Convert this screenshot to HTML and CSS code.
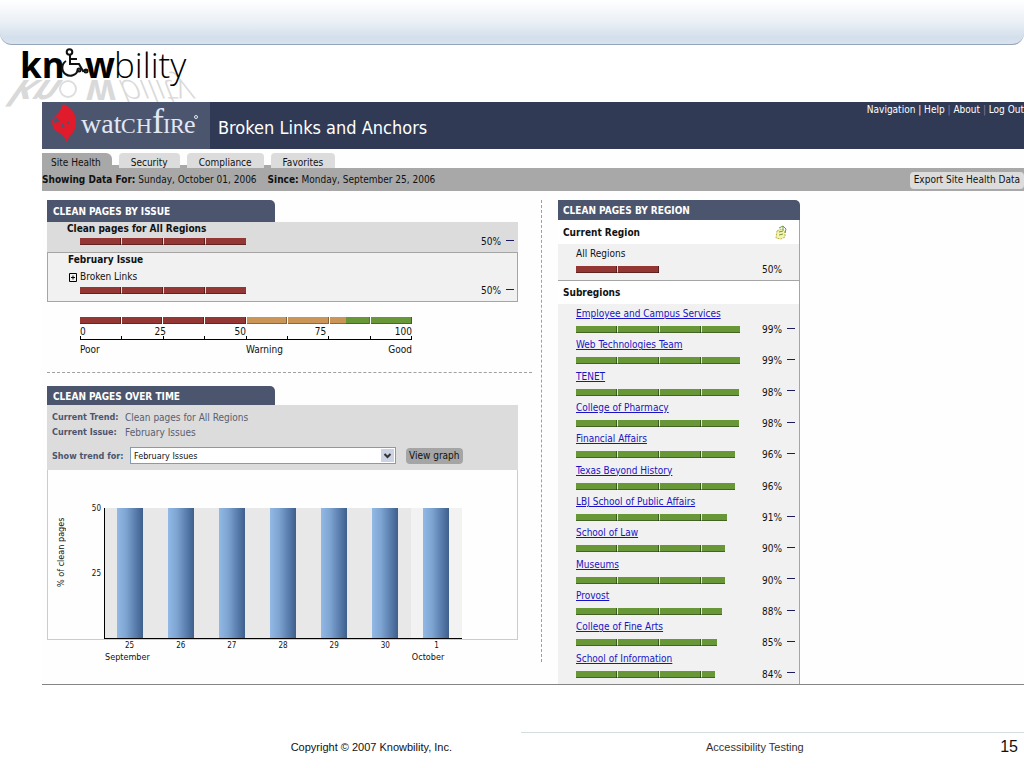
FILE: index.html
```html
<!DOCTYPE html>
<html lang="en">
<head>
<meta charset="utf-8">
<title>Broken Links and Anchors</title>
<link rel="stylesheet" href="styles.css">
</head>
<body>
<div class="slide-top"></div>
<div class="brand">
  <svg class="brand-logo" width="230" height="57" viewBox="0 0 230 57" role="img" aria-label="knowbility">
    <g class="brand-shadow" aria-hidden="true">
      <text x="0" y="0" class="kb-bold" transform="matrix(1 0 0.7 -1 21 35)">kn</text>
      <text x="0" y="0" class="kb-bold" transform="matrix(1 0 0 -1 86 35)">w</text>
      <text x="0" y="0" class="kb-light" transform="matrix(1 0 -0.4 -1 116 35)">bility</text>
      <circle cx="68" cy="44" r="8"/>
    </g>
    <text x="20" y="33" class="kb-bold">kn</text>
    <text x="85" y="33" class="kb-bold">w</text>
    <text x="114" y="33" class="kb-light">bility</text>
    <g class="chair">
      <circle cx="69.500" cy="7" r="2.800"/>
      <path d="M70 10v9h9l4 7 4-1M70 14h7M66 16a8 8 0 1 0 12 9"/>
      <circle cx="79" cy="25" r="1.500"/><circle cx="86" cy="26" r="1.500"/>
    </g>
  </svg>
</div>
<main class="app">
  <header class="app-head">
    <div class="product">
      <svg width="168" height="47" viewBox="0 0 168 47" role="img" aria-label="Watchfire">
        <path fill="#e01b2c" d="M21 2c8 3 13 9 13 18 0 9-4 11-10 20-1-5-2-6-5-8-6-3-9-7-9-13 1-4 5-6 7-9 2-3 3-5 4-8z"/>
        <path fill="#4c556e" d="M13 15l5 3-2 2-5 1zM20 21l3 3-3 2zM25 19l3 1-3 3z"/>
        <g class="wf-text">
          <text x="39" y="31" font-size="28">wat</text>
          <text x="79" y="31" font-size="22">C</text>
          <text x="94" y="31" font-size="22">H</text>
          <text x="110" y="31" font-size="36">f</text>
          <text x="121" y="31" font-size="22">I</text>
          <text x="128" y="31" font-size="22">R</text>
          <text x="142" y="31" font-size="26">e</text>
          <circle cx="154" cy="15" r="1.500"/>
        </g>
      </svg>
    </div>
    <h1>Broken Links and Anchors</h1>
    <nav class="tools"><a href="#">Navigation</a> | <a href="#">Help</a> <i>|</i> <a href="#">About</a> <i>|</i> <a href="#">Log Out</a></nav>
  </header>
  <nav class="tabs">
    <a href="#" class="tab active">Site Health</a><a href="#" class="tab">Security</a><a href="#" class="tab">Compliance</a><a href="#" class="tab">Favorites</a>
  </nav>
  <div class="datebar">
    <span><b>Showing Data For:</b> Sunday, October 01, 2006</span>
    <span><b>Since:</b> Monday, September 25, 2006</span>
    <button class="export">Export Site Health Data</button>
  </div>
  <div class="columns">
    <div class="left">
      <section class="panel">
        <h2>CLEAN PAGES BY ISSUE</h2>
        <div class="all">
          <h3>Clean pages for All Regions</h3>
          <div class="metric"><div class="track"><div class="fill red" style="width:50%"></div></div><span class="pct">50%</span><span class="dash"></span></div>
        </div>
        <div class="issue">
          <h3>February Issue</h3>
          <div class="sub"><svg width="8" height="9" viewBox="0 0 8 9" aria-hidden="true"><path d="M.5.5h7v8h-7zM2 4.500h4M4 2.500v4" fill="none" stroke="#000"/></svg>Broken Links</div>
          <div class="metric"><div class="track"><div class="fill red" style="width:50%"></div></div><span class="pct">50%</span><span class="dash"></span></div>
        </div>
      </section>
      <div class="scale">
        <div class="segments"><span class="red"></span><span class="red"></span><span class="red"></span><span class="red"></span><span class="tan"></span><span class="tan"></span><span class="mixed"></span><span class="green"></span></div>
        <div class="numbers"><span>0</span><span>25</span><span>50</span><span>75</span><span>100</span></div>
        <div class="ticks"><i></i><i></i><i></i><i></i><i></i><i></i><i></i><i></i></div>
        <div class="words"><span>Poor</span><span>Warning</span><span>Good</span></div>
      </div>
      <div class="dots"></div>
      <section class="panel">
        <h2 class="short">CLEAN PAGES OVER TIME</h2>
        <form class="trend">
          <p><b>Current Trend:</b>Clean pages for All Regions</p>
          <p><b>Current Issue:</b>February Issues</p>
          <div class="pick">
            <label for="trend">Show trend for:</label>
            <span class="combo"><select id="trend"><option>February Issues</option></select><svg width="13" height="13" viewBox="0 0 13 13" aria-hidden="true"><path d="M3.500 5l3 3 3-3" fill="none" stroke="#333" stroke-width="2"/></svg></span>
            <button type="button">View graph</button>
          </div>
        </form>
        <div class="chart">
          <div class="ylabel">% of clean pages</div>
          <div class="ynums"><span>50</span><span>25</span></div>
          <div class="plot"><div><i></i></div><div><i></i></div><div><i></i></div><div><i></i></div><div><i></i></div><div><i></i></div><div><i></i></div></div>
        </div>
        <div class="days"><span>25</span><span>26</span><span>27</span><span>28</span><span>29</span><span>30</span><span>1</span></div>
        <div class="months"><span>September</span><span>October</span></div>
      </section>
    </div>
    <section class="regions">
      <h2>CLEAN PAGES BY REGION</h2>
      <div class="region-body">
        <h3>Current Region<svg width="13" height="15" viewBox="0 0 13 15" aria-hidden="true"><path d="M2 6l4-2 4 2v6l-4 2-5-1z" fill="#f6f3b0" stroke="#b8b048" stroke-dasharray="2 1"/><path d="M4 3l4-2 3 3-1 4M8 1v4M4 7l4-1M4 10l4-1" fill="none" stroke="#6f9a3c"/></svg></h3>
        <div class="current"><div class="name">All Regions</div>
          <div class="metric"><div class="track"><div class="fill red" style="width:50%"></div></div><span class="pct">50%</span></div></div>
        <h3 class="subhead">Subregions</h3>
        <ul>
          <li><a href="#">Employee and Campus Services</a><div class="metric"><div class="track"><div class="fill green" style="width:99%"></div></div><span class="pct">99%</span><span class="dash"></span></div></li>
          <li><a href="#">Web Technologies Team</a><div class="metric"><div class="track"><div class="fill green" style="width:99%"></div></div><span class="pct">99%</span><span class="dash"></span></div></li>
          <li><a href="#">TENET</a><div class="metric"><div class="track"><div class="fill green" style="width:98%"></div></div><span class="pct">98%</span><span class="dash"></span></div></li>
          <li><a href="#">College of Pharmacy</a><div class="metric"><div class="track"><div class="fill green" style="width:98%"></div></div><span class="pct">98%</span><span class="dash"></span></div></li>
          <li><a href="#">Financial Affairs</a><div class="metric"><div class="track"><div class="fill green" style="width:96%"></div></div><span class="pct">96%</span><span class="dash"></span></div></li>
          <li><a href="#">Texas Beyond History</a><div class="metric"><div class="track"><div class="fill green" style="width:96%"></div></div><span class="pct">96%</span></div></li>
          <li><a href="#">LBJ School of Public Affairs</a><div class="metric"><div class="track"><div class="fill green" style="width:91%"></div></div><span class="pct">91%</span><span class="dash"></span></div></li>
          <li><a href="#">School of Law</a><div class="metric"><div class="track"><div class="fill green" style="width:90%"></div></div><span class="pct">90%</span><span class="dash"></span></div></li>
          <li><a href="#">Museums</a><div class="metric"><div class="track"><div class="fill green" style="width:90%"></div></div><span class="pct">90%</span><span class="dash"></span></div></li>
          <li><a href="#">Provost</a><div class="metric"><div class="track"><div class="fill green" style="width:88%"></div></div><span class="pct">88%</span><span class="dash"></span></div></li>
          <li><a href="#">College of Fine Arts</a><div class="metric"><div class="track"><div class="fill green" style="width:85%"></div></div><span class="pct">85%</span><span class="dash"></span></div></li>
          <li><a href="#">School of Information</a><div class="metric"><div class="track"><div class="fill green" style="width:84%"></div></div><span class="pct">84%</span><span class="dash"></span></div></li>
        </ul>
      </div>
    </section>
  </div>
</main>
<footer class="slide-foot">
  <span class="copy">Copyright © 2007 Knowbility, Inc.</span>
  <div class="foot-right"><span class="topic">Accessibility Testing</span><span class="page">15</span></div>
</footer>
</body>
</html>
```
FILE: styles.css
```css
* { box-sizing: border-box; }
body {
  margin: 0;
  background: #fff;
  color: #111;
  font: 10px/14px "DejaVu Sans Condensed", "DejaVu Sans", sans-serif;
  overflow-x: hidden;
}
h1, h2, h3, p, ul { margin: 0; padding: 0; }
ul { list-style: none; }
button, select { font: inherit; color: #111; border: 0; margin: 0; }

.slide-top {
  height: 45px;
  background: linear-gradient(#fff, #eaf0f6 50%, #d3dfeb 85%, #d9e3ee);
  border-bottom: 1px solid #94a5bc;
  border-radius: 0 0 12px 12px;
}
.brand { height: 57px; }
.brand-logo { display: block; overflow: visible; }
.kb-bold { font: bold 35px "Open Sans", sans-serif; }
.kb-light { font: 300 35px "Open Sans", sans-serif; }
.brand-shadow { fill: #d9d9d9; }
.brand-shadow circle { fill: none; stroke: #dedede; stroke-width: 2; }
.chair { fill: none; stroke: #111; stroke-width: 2; }

.app { position: relative; margin-left: 42px; background: #fefefe; border-bottom: 1px solid #858585; }
.app-head { display: flex; height: 47px; background: #303a55; color: #fff; }
.product { width: 168px; background: #4c556e; }
.product svg { display: block; }
.wf-text { fill: #e2e8f6; font-family: "Liberation Serif", serif; }
.wf-text circle { fill: none; stroke: #e2e8f6; }
h1 { flex: 1; padding: 14px 0 0 8px; font-size: 18px; line-height: 24px; font-weight: normal; white-space: nowrap; }
.tools { padding-top: 1px; white-space: nowrap; }
.tools a { color: #fff; text-decoration: none; }
.tools i { color: #8a7a9c; font-style: normal; }

.tabs {
  display: flex;
  gap: 7px;
  width: fit-content;
  height: 19px;
  padding-top: 4px;
  background: linear-gradient(#a8a8a8, #a8a8a8) bottom / 100% 3px no-repeat;
}
.tab {
  padding: 3px 12px 0;
  background: #dcdcdc;
  border-radius: 4px 4px 0 0;
  color: #111;
  text-decoration: none;
}
.active { background: #a8a8a8; padding: 3px 11px 0 9px; border-radius: 0 6px 0 0; }
.datebar { display: flex; align-items: center; gap: 11px; height: 23px; padding-top: 1px; background: #a8a8a8; white-space: nowrap; }
.export { margin-left: auto; height: 17px; padding: 0 4px; border-radius: 4px; background: #dcdcdc; white-space: nowrap; }

.columns { display: grid; grid-template-columns: 500fr 482fr; min-height: 493px; }
.left { margin: 9px 0 22px; padding: 0 9px 0 5px; border-right: 1px dashed #a0a0a0; }
.panel { margin-right: 14px; }
h2 {
  width: 228px;
  padding: 5px 6px 3px;
  background: #4c556e;
  border-radius: 0 5px 0 0;
  color: #fff;
  font-size: 10px;
  line-height: 14px;
}
h3 { font-size: 10px; }
.all { height: 30px; padding: 0 4px 0 33px; background: #dcdcdc; }
.all h3 { margin-left: -13px; line-height: 14px; }
.issue { height: 50px; padding: 0 3px 0 32px; background: #f1f1f1; border: 1px solid #a5a5a5; }
.issue h3 { margin-left: -12px; line-height: 14px; }
.sub { display: flex; align-items: center; gap: 3px; margin: 3px 0 1px -11px; }
.metric { display: flex; align-items: center; height: 11px; line-height: 11px; }
.track { width: 332px; }
.fill {
  height: 7px;
  border-bottom: 1px solid rgba(0, 0, 0, .35);
  background-image: repeating-linear-gradient(90deg, transparent 0 40px, rgba(0, 0, 0, .4) 40px 41px, rgba(255, 255, 255, .8) 41px 42px);
}
.red { background-color: #943634; }
.tan { background-color: #cb9558; }
.green { background-color: #689738; }
.pct { margin-left: auto; }
.dash { width: 8px; height: 1px; margin-left: 5px; margin-bottom: 3px; background: #1b1b5e; }

.scale { width: 332px; margin: 15px 0 0 33px; }
.segments { display: flex; gap: 1px; height: 7px; }
.segments span { flex: 1; border-right: 1px solid rgba(0, 0, 0, .35); border-bottom: 1px solid rgba(0, 0, 0, .3); }
.mixed { background: linear-gradient(90deg, #cb9558 40%, #689738 40%); }
.numbers { display: flex; justify-content: space-between; height: 12px; line-height: 16px; }
.ticks { display: flex; height: 4px; border-bottom: 1px solid #000; border-right: 1px solid #000; }
.ticks i { flex: 1; border-left: 1px solid #000; }
.words { display: grid; grid-template-columns: 2fr 1fr 1fr; line-height: 20px; }
.words span:nth-child(3) { text-align: right; }
.dots { margin: 12px 0 13px; border-top: 1px dashed #a0a0a0; }
.short { padding: 4px 6px 1px; }

.trend { height: 65px; padding: 5px; background: #dcdcdc; color: #5a6070; }
.trend p { display: flex; line-height: 15px; }
.trend b { width: 73px; }
.trend b, .trend label { color: #4c556e; font-size: 9px; font-weight: bold; white-space: nowrap; }
.pick { display: flex; align-items: center; margin-top: 7px; }
.pick label { width: 78px; }
.combo { display: flex; flex: 0 1 266px; height: 17px; padding: 1px; border: 1px solid #7f9db9; background: #fff; }
.combo select { flex: 1; min-width: 0; appearance: none; background: #fff; padding: 0 2px; font-size: 9px; }
.combo svg { background: #ccd3e4; }
.pick button { margin-left: 10px; height: 16px; padding: 0 3px; border-radius: 4px; background: #a5a5a5; white-space: nowrap; }

.chart { display: flex; height: 170px; padding-top: 38px; border: 1px solid #ccc; border-top: 0; }
.ylabel { width: 26px; height: 88px; writing-mode: vertical-rl; transform: rotate(180deg); text-align: center; line-height: 26px; font-size: 9px; }
.ynums { display: flex; flex-direction: column; gap: 57px; width: 28px; margin: -3px 0 0 2px; padding: 0 3px; text-align: right; font-size: 8px; line-height: 8px; }
.plot { display: grid; grid-template-columns: repeat(7, 1fr); width: 358px; border-left: 1px solid #000; border-bottom: 1px solid #000; background: #e8e8e8; }
.plot div:last-child { background: #f2f2f2; }
.plot i { display: block; width: 26px; height: 100%; margin-left: 12px; background: linear-gradient(90deg, #92b8e4, #7ea4d2 35%, #5579a9 75%, #3f5f8c); }
.days, .months { display: grid; width: 358px; margin-left: 58px; }
.days { grid-template-columns: repeat(7, 1fr); font-size: 8px; line-height: 12px; }
.days span { padding-right: 2px; text-align: center; }
.months { grid-template-columns: 6fr 1fr; line-height: 10px; font-size: 9px; }

.regions { display: flex; flex-direction: column; width: 242px; margin: 9px 0 0 16px; }
.regions h2 { width: 100%; padding: 4px 5px 2px; }
.region-body { display: flex; flex-direction: column; flex: 1; background: #f1f1f1; border-right: 1px solid #a5a5a5; }
.region-body h3 { display: flex; align-items: center; justify-content: space-between; height: 24px; padding: 1px 11px 0 5px; background: #fff; }
.region-body .metric { padding-right: 4px; }
.current { height: 36px; padding: 0 0 0 18px; }
.name, li > a { display: block; width: fit-content; line-height: 20px; }
.region-body .subhead { border-top: 1px solid #a5a5a5; }
.region-body .track { width: 166px; margin-right: 20px; }
.region-body .pct { margin-left: 0; }
.regions ul { flex: 1; display: grid; grid-auto-rows: 1fr; padding: 0 0 4px 18px; }
.regions a { color: #1a13c4; }

.slide-foot { display: grid; grid-template-columns: 521fr 503fr; margin-top: 47px; font-family: "Liberation Sans", Arial, sans-serif; font-size: 11px; }
.copy { padding: 8px 69px 0 0; text-align: right; }
.foot-right { display: flex; justify-content: space-between; padding: 7px 6px 0 185px; border-top: 1px solid #d5dedf; color: #333; }
.page { font-size: 16px; color: #111; }
```
